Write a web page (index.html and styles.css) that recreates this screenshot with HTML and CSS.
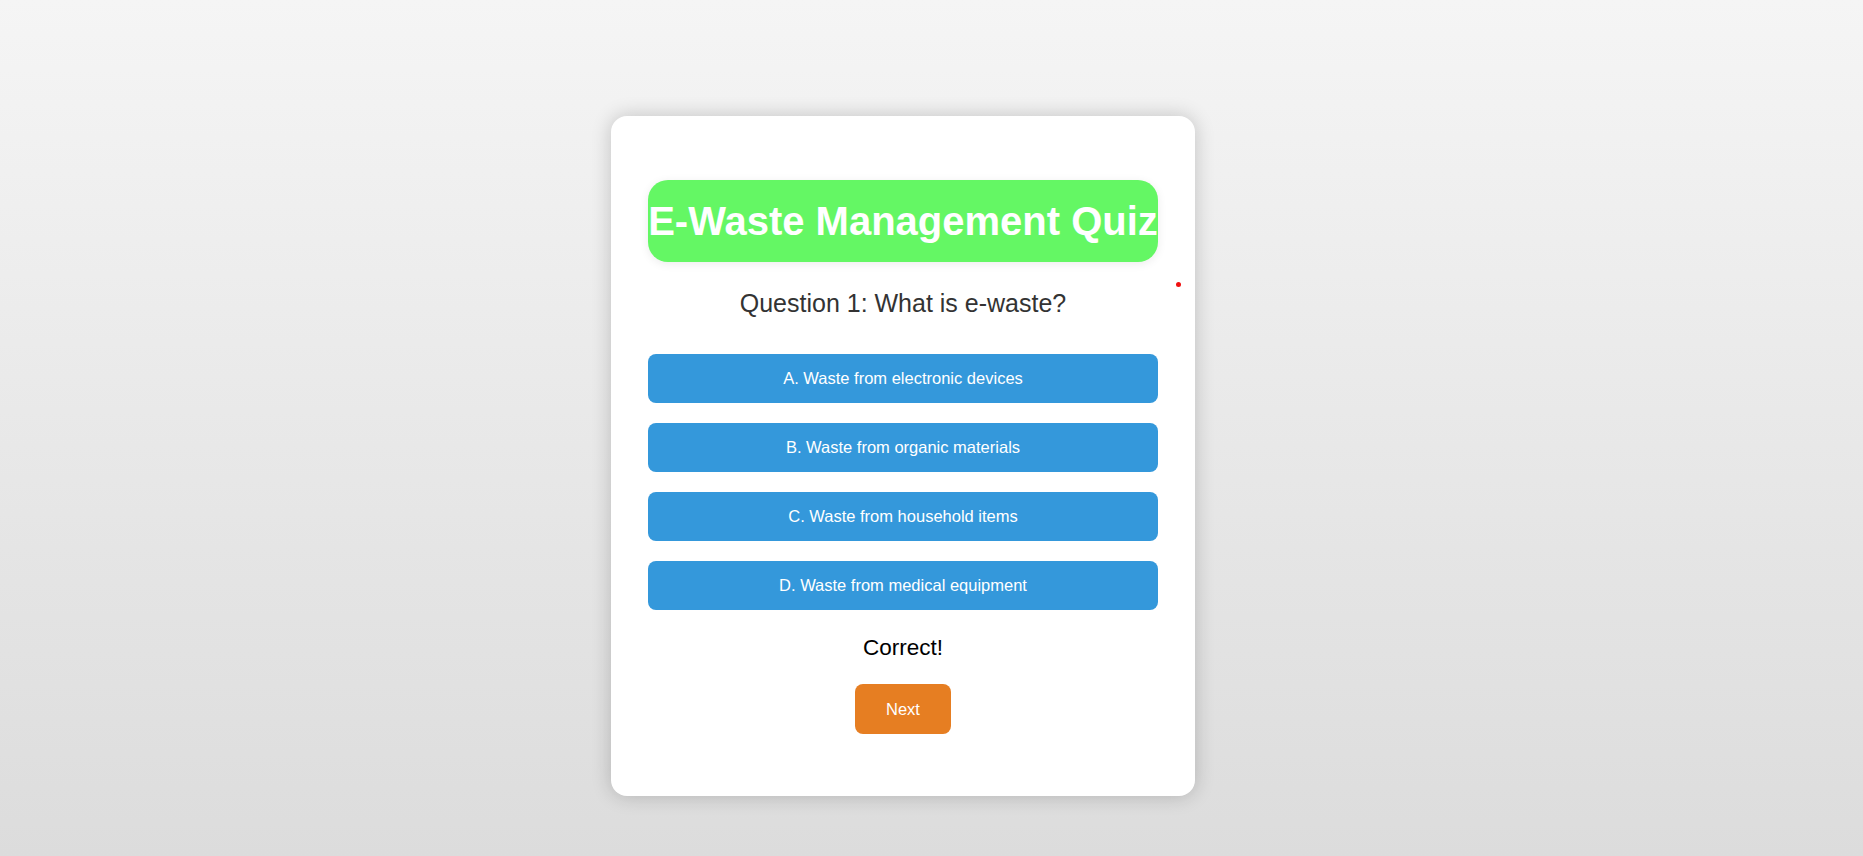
FILE: index.html
```html
<!DOCTYPE html>
<html lang="en">
<head>
<meta charset="utf-8">
<title>E-Waste Management Quiz</title>
<link rel="stylesheet" href="styles.css">
</head>
<body>
  <div class="stage">
    <main class="card">
      <h1 class="title">E-Waste Management Quiz</h1>
      <div class="question">Question 1: What is e-waste?</div>
      <div class="options">
        <button class="option">A. Waste from electronic devices</button>
        <button class="option">B. Waste from organic materials</button>
        <button class="option">C. Waste from household items</button>
        <button class="option">D. Waste from medical equipment</button>
      </div>
      <div class="feedback">Correct!</div>
      <button class="next">Next</button>
      <span class="dot"></span>
    </main>
    <div class="spacer"></div>
  </div>
</body>
</html>
```

FILE: styles.css
```css
html, body {
  margin: 0;
  height: 100%;
}
body {
  background: linear-gradient(to bottom, #f5f5f5 0%, #dcdcdc 100%);
  font-family: "Liberation Sans", Arial, sans-serif;
}
.stage {
  display: flex;
  justify-content: center;
  align-items: flex-start;
  padding-top: 116px;
}
.spacer {
  width: 57px;
  flex: none;
}
.card {
  position: relative;
  width: 510px;
  padding: 37px 37px 62px;
  background: #fff;
  border-radius: 16px;
  box-shadow: 0 0 20px rgba(0, 0, 0, 0.2);
  display: flex;
  flex-direction: column;
  align-items: center;
}
.title {
  align-self: stretch;
  margin: 27px 0 0;
  padding: 18px 0;
  height: 46px;
  line-height: 46px;
  background: #64f764;
  color: #fff;
  font-size: 40px;
  font-weight: bold;
  text-align: center;
  white-space: nowrap;
  border-radius: 20px;
  box-shadow: 0 2px 10px rgba(0, 0, 0, 0.08);
}
.question {
  margin-top: 27px;
  font-size: 25px;
  line-height: 28px;
  color: #333;
}
.options {
  align-self: stretch;
  display: flex;
  flex-direction: column;
  gap: 20px;
  margin-top: 37px;
}
.option {
  display: block;
  width: 100%;
  padding: 15px;
  border: 0;
  border-radius: 8px;
  background: #3498db;
  color: #fff;
  font-family: "Liberation Sans", Arial, sans-serif;
  font-size: 16.5px;
  line-height: 19px;
}
.feedback {
  margin-top: 25px;
  font-size: 22.5px;
  line-height: 25px;
  color: #000;
}
.next {
  margin-top: 24px;
  padding: 15px 0;
  width: 96px;
  height: 50px;
  border: 0;
  border-radius: 8px;
  background: #e67e22;
  color: #fff;
  font-family: "Liberation Sans", Arial, sans-serif;
  font-size: 16.5px;
  line-height: 20px;
}
.dot {
  position: absolute;
  left: 565px;
  top: 166px;
  width: 5px;
  height: 5px;
  border-radius: 50%;
  background: #f01010;
}
```
